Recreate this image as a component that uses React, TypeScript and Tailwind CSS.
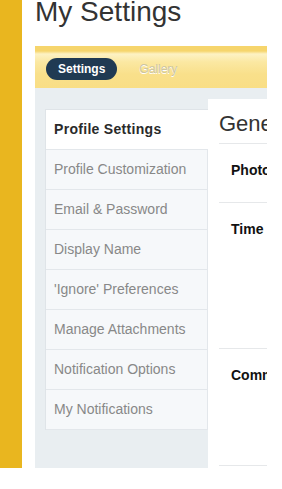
const navItems = [
  'Profile Settings',
  'Profile Customization',
  'Email & Password',
  'Display Name',
  "'Ignore' Preferences",
  'Manage Attachments',
  'Notification Options',
  'My Notifications',
];

const rows = [
  { label: 'Photo', height: 'h-[59px]' },
  { label: 'Time Zone', height: 'h-[146px]' },
  { label: 'Community', height: 'h-[117px]' },
];

export default function App() {
  return (
    <div className="flex bg-white font-['Liberation_Sans',Arial,sans-serif]">
      <div className="w-[22px] h-[468px] shrink-0 bg-[#e9b61f]" />
      <div className="ml-[13px] w-[232px] shrink-0">
        <h1 className="mt-[-2px] mb-[20px] text-[28px] leading-[28px] text-[#333] whitespace-nowrap">
          My Settings
        </h1>

        <div className="h-[42px] flex items-center gap-[10px] pl-[11px] pt-[3px] bg-[linear-gradient(to_bottom,#f6d56c_0px,#f6d56c_5px,#fdf2c4_8px,#fbe8a2_16px,#f9e08b_28px,#f9de85_42px)]">
          <span className="h-[22px] px-3 flex items-center rounded-full bg-[#203a53] text-white text-[12px] font-bold">
            Settings
          </span>
          <span className="h-[22px] px-3 flex items-center text-[12px] text-[#cdc5a2] [text-shadow:0_1px_0_#fff]">
            Gallery
          </span>
        </div>

        <div className="h-[380px] flex items-start pl-[10px] pt-[11px] bg-[#e9eef1] overflow-hidden">
          <ul className="mt-[10px] w-[163px] shrink-0 border-t border-l border-[#dfe4e8]">
            {navItems.map((item, i) => (
              <li
                key={item}
                className={
                  i === 0
                    ? 'h-[40px] flex items-center px-2 border-b border-[#e3e7eb] bg-white text-[14px] font-bold tracking-[0.3px] text-[#2a2a2a] whitespace-nowrap'
                    : 'h-[40px] flex items-center px-2 border-b border-r border-[#e3e7eb] bg-[#f6f8fa] text-[14px] text-[#888] whitespace-nowrap'
                }
              >
                {item}
              </li>
            ))}
          </ul>

          <div className="flex-1 min-w-0 h-[369px] bg-white overflow-hidden">
            <div className="ml-[11px]">
              <h2 className="pt-[13px] pb-[7px] text-[22px] leading-[24px] text-[#333] whitespace-nowrap">
                General Settings
              </h2>
              {rows.map((row) => (
                <div key={row.label} className={`border-t border-[#e6e8ea] ${row.height}`}>
                  <div className="pl-[12px] pt-[18px] text-[14px] leading-4 font-bold text-[#111] whitespace-nowrap">
                    {row.label}
                  </div>
                </div>
              ))}
              <div className="border-t border-[#e6e8ea]" />
            </div>
          </div>
        </div>
      </div>
    </div>
  );
}
